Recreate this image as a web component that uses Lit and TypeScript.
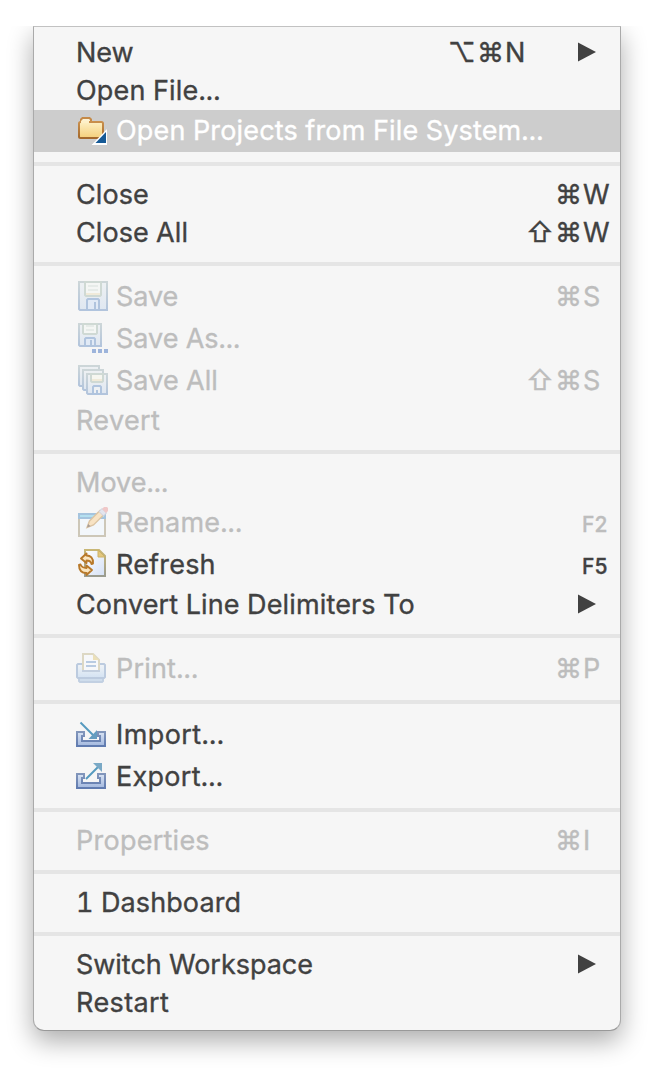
import { LitElement, html, svg, css, nothing } from "lit";
import { customElement, property } from "lit/decorators.js";
import { classMap } from "lit/directives/class-map.js";
import { styleMap } from "lit/directives/style-map.js";

type Item = {
  label: string;
  /** letter spacing of the label, px */
  track?: number;
  icon?: string;
  mods?: string[];
  key?: string;
  fkey?: string;
  submenu?: boolean;
  disabled?: boolean;
  selected?: boolean;
};

const GROUPS: Item[][] = [
  [
    { label: "New", track: -0.1, mods: ["⌥", "⌘"], key: "N", submenu: true },
    { label: "Open File...", track: 0.17 },
    { label: "Open Projects from File System...", track: 0.16, icon: "folder", selected: true },
  ],
  [
    { label: "Close", track: 0.1, mods: ["⌘"], key: "W" },
    { label: "Close All", track: 0.07, mods: ["⇧", "⌘"], key: "W" },
  ],
  [
    { label: "Save", track: -0.05, icon: "save", mods: ["⌘"], key: "S", disabled: true },
    { label: "Save As...", track: 0, icon: "saveAs", disabled: true },
    { label: "Save All", track: 0.05, icon: "saveAll", mods: ["⇧", "⌘"], key: "S", disabled: true },
    { label: "Revert", track: 0.35, disabled: true },
  ],
  [
    { label: "Move...", track: 0, disabled: true },
    { label: "Rename...", track: 0.15, icon: "rename", fkey: "F2", disabled: true },
    { label: "Refresh", track: 0.2, icon: "refresh", fkey: "F5" },
    { label: "Convert Line Delimiters To", track: 0.14, submenu: true },
  ],
  [{ label: "Print...", track: 0.2, icon: "print", mods: ["⌘"], key: "P", disabled: true }],
  [
    { label: "Import...", track: 0.4, icon: "import" },
    { label: "Export...", track: 0.28, icon: "export" },
  ],
  [{ label: "Properties", track: 0.25, mods: ["⌘"], key: "I", disabled: true }],
  [{ label: "1 Dashboard", track: 0.1 }],
  [{ label: "Switch Workspace", track: -0.03, submenu: true }, { label: "Restart", track: 0.4 }],
];

const floppyGradient = svg`
  <linearGradient id="edge" x1="0" y1="0" x2="0" y2="1">
    <stop offset="0" stop-color="#cdd6d8"/><stop offset="1" stop-color="#b2c4dc"/>
  </linearGradient>
  <linearGradient id="body" x1="0" y1="0" x2="0" y2="1">
    <stop offset="0" stop-color="#eef1f3"/><stop offset="1" stop-color="#dfe7f1"/>
  </linearGradient>`;

const trayGradient = svg`
  <linearGradient id="tray" x1="0" y1="0" x2="0" y2="1">
    <stop offset="0" stop-color="#d8e3f3"/><stop offset="1" stop-color="#a3b8de"/>
  </linearGradient>
  <linearGradient id="trayEdge" x1="0" y1="0" x2="0" y2="1">
    <stop offset="0" stop-color="#8296bb"/><stop offset="1" stop-color="#607bb0"/>
  </linearGradient>`;

const tray = svg`
  <path d="M1 15H8V19H6V24H24V19H22V15H29V29H1Z" fill="url(#tray)" stroke="url(#trayEdge)" stroke-width="2"/>`;

const ICONS: Record<string, unknown> = {
  folder: svg`
    <defs>
      <linearGradient id="f" x1="0" y1="0" x2="0" y2="1">
        <stop offset="0" stop-color="#fdf0c4"/><stop offset="1" stop-color="#f5cf7a"/>
      </linearGradient>
      <linearGradient id="fe" x1="0" y1="0" x2="0" y2="1">
        <stop offset="0" stop-color="#c98f4c"/><stop offset="1" stop-color="#a4692c"/>
      </linearGradient>
    </defs>
    <path d="M5 10V6.5L6.5 5H13.500L15 6.500V10" fill="#fdf3d6" stroke="#c58a48" stroke-width="2"/>
    <rect x="3" y="9" width="24" height="16" rx="1.500" fill="url(#f)" stroke="url(#fe)" stroke-width="2"/>
    <path d="M5 10V7.500H13V10Z" fill="#fdf0c8"/>
    <path d="M31 16V32H15.500Z" fill="#fff"/>
    <path d="M30 19V30H19.500Z" fill="#165a96"/>`,
  save: svg`
    <defs>${floppyGradient}</defs>
    <path d="M3 3H31V31H4L3 30Z" fill="url(#body)" stroke="url(#edge)" stroke-width="2"/>
    <path d="M9 3V16L10 17H24L25 16V3Z" fill="#f4f6f4" stroke="#cfd9d4" stroke-width="2"/>
    <path d="M12 7H22M12 11H22" stroke="#e6ebe8" stroke-width="2"/>
    <path d="M10 15H24" stroke="#f0ead9" stroke-width="2"/>
    <path d="M11 31V21L12 20H22L23 21V31Z" fill="#e1eaf6" stroke="#b0c4de" stroke-width="2"/>
    <path d="M19 23V30" stroke="#b0c4de" stroke-width="2"/>`,
  saveAs: svg`
    <defs>${floppyGradient}</defs>
    <path d="M3 3H25V25H4L3 24Z" fill="url(#body)" stroke="url(#edge)" stroke-width="2"/>
    <path d="M7 3V12L8 13H20L21 12V3Z" fill="#f4f6f4" stroke="#cfd9d4" stroke-width="2"/>
    <path d="M10 5H18M10 9H18" stroke="#e6ebe8" stroke-width="2"/>
    <path d="M9 25V18L10 17H18L19 18V25Z" fill="#e1eaf6" stroke="#b0c4de" stroke-width="2"/>
    <path d="M15 19V24" stroke="#b0c4de" stroke-width="2"/>
    <path d="M16 28h4v4h-4zM22 28h4v4h-4zM28 28h4v4h-4z" fill="#9db4db"/>`,
  saveAll: svg`
    <defs>${floppyGradient}</defs>
    <path d="M3 3H23V23H4L3 22Z" fill="url(#body)" stroke="url(#edge)" stroke-width="2"/>
    <path d="M7 7H27V27H8L7 26Z" fill="url(#body)" stroke="url(#edge)" stroke-width="2"/>
    <path d="M11 11H31V31H12L11 30Z" fill="url(#body)" stroke="url(#edge)" stroke-width="2"/>
    <path d="M15 11V18L16 19H26L27 18V11Z" fill="#f6f6f0" stroke="#cfd9d4" stroke-width="2"/>
    <path d="M16 17H26" stroke="#f0ead9" stroke-width="2"/>
    <path d="M17 31V24L18 23H24L25 24V31Z" fill="#eef1f4" stroke="#b0c4de" stroke-width="2"/>
    <path d="M21 27V30" stroke="#b0c4de" stroke-width="2"/>`,
  rename: svg`
    <rect x="3" y="10" width="26" height="21" fill="#f3f7fb" stroke="#cdc7b8" stroke-width="2"/>
    <rect x="2" y="8" width="28" height="6" fill="#a5c4de"/>
    <rect x="4" y="10" width="24" height="2" fill="#b4e0f0"/>
    <path d="M11 22.500L13.500 16L24 5.500L28 9.500L17.500 20Z" fill="#f8e3c4" stroke="#dcc5a4" stroke-width="1.400"/>
    <path d="M11 22.500L12.200 19L14.500 21.200Z" fill="#a79c96"/>
    <path d="M23 6.500L26 3.500L30.500 8L27.500 11Z" fill="#e3e5ee" stroke="#ccd0de" stroke-width="1"/>
    <path d="M26 4L28 2H31L32 3V6L30 8Z" fill="#f0c8c8"/>`,
  refresh: svg`
    <defs>
      <linearGradient id="pg" x1="0" y1="0" x2="1" y2="1">
        <stop offset="0" stop-color="#fff"/><stop offset="1" stop-color="#d5e1f6"/>
      </linearGradient>
      <linearGradient id="pe" x1="0" y1="0" x2="0" y2="1">
        <stop offset="0" stop-color="#c9b776"/><stop offset="1" stop-color="#9a9c90"/>
      </linearGradient>
    </defs>
    <path d="M9 3H23L29 9V29H9Z" fill="url(#pg)" stroke="url(#pe)" stroke-width="2"/>
    <path d="M22 3V10H29Z" fill="#e3c77e" stroke="#cdb267" stroke-width="1"/>
    <path d="M5 11.500L10.500 6.500V8.500C14.500 8.500 17.500 11 17 16.500L15.500 17C15 14.500 13.500 13.500 10.500 13.500V16Z" fill="#fbe6c0" stroke="#b8792a" stroke-width="1.900" stroke-linejoin="round"/>
    <path d="M16 23L10.500 28V26C6 26 3 23.500 3 18L4.500 17.500C5.500 20 7.500 21 10.500 21V18.500Z" fill="#fbe6c0" stroke="#b8792a" stroke-width="1.900" stroke-linejoin="round"/>`,
  print: svg`
    <defs>
      <linearGradient id="pr" x1="0" y1="0" x2="0" y2="1">
        <stop offset="0" stop-color="#f1f4f7"/><stop offset="1" stop-color="#d3e2f2"/>
      </linearGradient>
    </defs>
    <path d="M3 26H27V30L26 31H4L3 30Z" fill="#cfddec" stroke="#c2d0e2" stroke-width="2"/>
    <path d="M1 14L2 13H28L29 14V26L28 27H2L1 26Z" fill="url(#pr)" stroke="#bccbdf" stroke-width="2"/>
    <path d="M7 20V3H17L23 9V20Z" fill="#f7f8fa" stroke="#ddd8c4" stroke-width="2"/>
    <path d="M17 3V9H23Z" fill="#ece0b8"/>
    <path d="M10 11H20M10 15H20" stroke="#b9cbe2" stroke-width="2"/>
    <path d="M6 20H24" stroke="#c3cfdf" stroke-width="2"/>`,
  import: svg`
    <defs>${trayGradient}</defs>${tray}
    <path d="M4.500 5.500L18 19" stroke="#569abf" stroke-width="2"/>
    <path d="M21 13V22H12.500Z" fill="#659dc0"/>`,
  export: svg`
    <defs>${trayGradient}</defs>${tray}
    <path d="M10 20L23 7" stroke="#569abf" stroke-width="2"/>
    <path d="M17 4H26V13Z" fill="#7aa9c6"/>`,
};

@customElement("menu-row")
class MenuRow extends LitElement {
  @property({ attribute: false }) item!: Item;

  static styles = css`
    :host { display: block; }
    .row {
      display: flex;
      align-items: center;
      box-sizing: border-box;
      height: 38px;
      padding-left: 42px;
      color: #414141;
      font: 400 27px/36px Inter, "Liberation Sans", sans-serif;
      font-variant-numeric: tabular-nums;
      -webkit-text-stroke: 0.35px currentColor;
      white-space: pre;
    }
    .row.tall { height: 42px; }
    .row.disabled { color: #bdbdbd; }
    .row.selected { background: #cdcdcd; color: #fff; }
    .icon { display: block; width: 32px; height: 32px; margin: 0 8px 4px 0; flex: none; }
    .label { flex: 1; }
    .keys { display: flex; }
    .mod { width: 28px; }
    .mod.wide { width: 29px; }
    .key { width: 37px; }
    .sub .key { width: 73px; }
    .fkey {
      width: 38px;
      font-size: 21px;
      font-weight: 500;
      line-height: 31px;
      align-self: flex-end;
      padding-bottom: 4px;
      font-variant-numeric: normal;
    }
    .arrow { width: 18px; height: 20px; margin: 0 24px 2px 0; fill: #414141; flex: none; }
  `;

  render() {
    const i = this.item;
    return html`<div class=${classMap({ row: true, tall: !!i.icon, disabled: !!i.disabled, selected: !!i.selected, sub: !!i.submenu })}>
      ${i.icon ? html`<svg class="icon" viewBox="0 0 32 32" fill="none">${ICONS[i.icon]}</svg>` : nothing}
      <span class="label" style=${styleMap({ letterSpacing: `${i.track ?? 0}px` })}>${i.label}</span>
      ${i.key
        ? html`<span class="keys">${i.mods!.map((m) => html`<span class=${classMap({ mod: true, wide: m !== "⌘" })}>${m}</span>`)}<span class="key">${i.key}</span></span>`
        : nothing}
      ${i.fkey ? html`<span class="fkey">${i.fkey}</span>` : nothing}
      ${i.submenu ? html`<svg class="arrow" viewBox="0 0 18 20"><path d="M0 0.500L18 10L0 19.500Z"/></svg>` : nothing}
    </div>`;
  }
}

@customElement("app-root")
class AppRoot extends LitElement {
  static styles = css`
    :host {
      display: block;
      box-sizing: border-box;
      height: 1072px;
      padding: 26px 33px 41px;
      background: #fff;
      overflow: hidden;
    }
    .menu {
      box-sizing: border-box;
      height: 1005px;
      padding: 7px 0 8px;
      border: 1px solid #aaa;
      border-top-color: #c2c2c2;
      border-bottom-color: #999;
      border-radius: 0 0 11px 11px;
      background: #f6f6f6;
      box-shadow: 0 10px 26px rgba(0, 0, 0, 0.33);
      clip-path: inset(0 -40px -50px -40px);
    }
    .separator { height: 4px; margin: 10px 0; background: #e5e5e5; }
  `;

  render() {
    return html`<div class="menu">
      ${GROUPS.map(
        (g, n) => html`${n ? html`<div class="separator"></div>` : nothing}${g.map((i) => html`<menu-row .item=${i}></menu-row>`)}`
      )}
    </div>`;
  }
}
